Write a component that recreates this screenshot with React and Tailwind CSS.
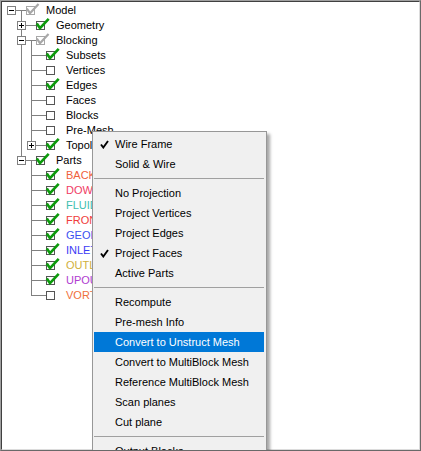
import React from 'react';

const parts = [
  { label: 'BACK', color: 'text-[#f0603c]' },
  { label: 'DOWN', color: 'text-[#f03c64]' },
  { label: 'FLUID', color: 'text-[#3cc0b0]' },
  { label: 'FRONT', color: 'text-[#f03c3c]' },
  { label: 'GEOM', color: 'text-[#3c50f0]' },
  { label: 'INLET', color: 'text-[#3c3cf5]' },
  { label: 'OUTLET', color: 'text-[#d0b03c]' },
  { label: 'UPOUT', color: 'text-[#b03cd0]' },
  { label: 'VORTEX', color: 'text-[#f0703c]' },
];

const tree = [
  { label: 'Model', level: 0, box: 'minus', check: 'gray', guides: [], last: true, root: true, open: true },
  { label: 'Geometry', level: 1, box: 'plus', check: 'on', guides: [false], last: false },
  { label: 'Blocking', level: 1, box: 'minus', check: 'gray', guides: [false], last: false, open: true },
  { label: 'Subsets', level: 2, check: 'on', guides: [false, true], last: false },
  { label: 'Vertices', level: 2, check: 'off', guides: [false, true], last: false },
  { label: 'Edges', level: 2, check: 'on', guides: [false, true], last: false },
  { label: 'Faces', level: 2, check: 'off', guides: [false, true], last: false },
  { label: 'Blocks', level: 2, check: 'off', guides: [false, true], last: false },
  { label: 'Pre-Mesh', level: 2, check: 'off', guides: [false, true], last: false },
  { label: 'Topology', level: 2, box: 'plus', check: 'on', guides: [false, true], last: true },
  { label: 'Parts', level: 1, box: 'minus', check: 'on', guides: [false], last: true, open: true },
  ...parts.map((p, i) => ({
    label: p.label,
    color: p.color,
    level: 2,
    check: i === parts.length - 1 ? 'off' : 'on',
    guides: [false, false],
    last: i === parts.length - 1,
  })),
];

const menu = [
  { label: 'Wire Frame', checked: true },
  { label: 'Solid & Wire' },
  'sep',
  { label: 'No Projection' },
  { label: 'Project Vertices' },
  { label: 'Project Edges' },
  { label: 'Project Faces', checked: true },
  { label: 'Active Parts' },
  'sep',
  { label: 'Recompute' },
  { label: 'Pre-mesh Info' },
  { label: 'Convert to Unstruct Mesh', active: true },
  { label: 'Convert to MultiBlock Mesh' },
  { label: 'Reference MultiBlock Mesh' },
  { label: 'Scan planes' },
  { label: 'Cut plane' },
  'sep',
  { label: 'Output Blocks' },
];

function ExpandBox({ type }) {
  return (
    <span className="absolute left-[1px] top-[3px] w-[9px] h-[9px] border border-[#808080] bg-white">
      <span className="absolute left-[1px] top-[3px] w-[5px] h-px bg-black" />
      {type === 'plus' && <span className="absolute left-[3px] top-[1px] w-px h-[5px] bg-black" />}
    </span>
  );
}

function CheckBox({ state }) {
  const gray = state === 'gray';
  return (
    <span
      className={`relative shrink-0 w-[9px] h-[9px] border bg-white ${
        gray ? 'border-[#a8a8a8]' : 'border-[#555555]'
      }`}
    >
      {state !== 'off' && (
        <svg className="absolute -left-[1px] -top-[3px] overflow-visible" width="13" height="11" viewBox="0 0 13 11">
          <polyline
            points="1.5,5.5 4,9.2 11.8,0.8"
            fill="none"
            stroke={gray ? '#a8a8a8' : '#0c9a0c'}
            strokeWidth={gray ? 2.2 : 2.6}
            strokeLinecap="square"
          />
        </svg>
      )}
    </span>
  );
}

function TreeRow({ node }) {
  const { level, guides, last, root, box, open } = node;
  return (
    <div className="flex items-center h-[15px] whitespace-nowrap">
      {guides.map((g, k) => (
        <span key={k} className="relative shrink-0 w-[10px] h-[15px]">
          {g && <span className="absolute left-[5px] top-0 bottom-0 w-px bg-[#808080]" />}
        </span>
      ))}

      {/* own cell: sibling line + connector + expander */}
      <span className="relative shrink-0 w-[10px] h-[15px]">
        {!root && (
          <span
            className={`absolute left-[5px] top-0 w-px bg-[#808080] ${last ? 'h-[8px]' : 'bottom-0'}`}
          />
        )}
        <span className="absolute left-[5px] right-0 top-[7px] h-px bg-[#808080]" />
        {box && <ExpandBox type={box} />}
      </span>

      {/* connector to checkbox, children line when open */}
      <span className="relative shrink-0 w-[10px] h-[15px]">
        <span className="absolute left-0 right-0 top-[7px] h-px bg-[#808080]" />
        {open && <span className="absolute left-[5px] top-[7px] bottom-0 w-px bg-[#808080]" />}
      </span>

      <CheckBox state={node.check} />
      <span className={`ml-[11px] text-[11px] leading-[15px] ${node.color || 'text-black'}`}>{node.label}</span>
    </div>
  );
}

function MenuCheck() {
  return (
    <svg width="9" height="9" viewBox="0 0 9 9">
      <polyline points="1,4.5 3.3,7.5 8,1" fill="none" stroke="#000" strokeWidth="1.9" />
    </svg>
  );
}

function ContextMenu() {
  return (
    <div className="absolute left-[91px] top-[130px] w-[175px] bg-[#f0f0f0] border border-[#979797] pt-[2px] shadow-[3px_3px_3px_rgba(0,0,0,0.35)]">
      {menu.map((item, i) =>
        item === 'sep' ? (
          <div key={i} className="h-[9px] flex items-center ml-[1px] mr-[2px]">
            <div className="w-full h-px bg-[#a0a0a0]" />
          </div>
        ) : (
          <div
            key={i}
            className={`flex items-center h-[20px] ml-[1px] mr-[2px] text-[11px] whitespace-nowrap ${
              item.active ? 'bg-[#0078d7] text-white' : 'text-black'
            }`}
          >
            <span className="w-[21px] shrink-0 pl-[6px] flex items-center">{item.checked && <MenuCheck />}</span>
            <span>{item.label}</span>
          </div>
        )
      )}
    </div>
  );
}

export default function App() {
  return (
    <div className="relative w-[421px] h-[451px] overflow-hidden bg-white font-['Liberation_Sans',Arial,sans-serif] border border-t-[#a0a0a0] border-l-[#a0a0a0] border-r-[#696969] border-b-[#696969]">
      <div className="w-full h-full border border-t-[#404040] border-l-[#404040] border-r-[#dcdcdc] border-b-[#dcdcdc] pt-[1px] pl-[4px]">
        {tree.map((node, i) => (
          <TreeRow key={i} node={node} />
        ))}
      </div>
      <ContextMenu />
    </div>
  );
}
